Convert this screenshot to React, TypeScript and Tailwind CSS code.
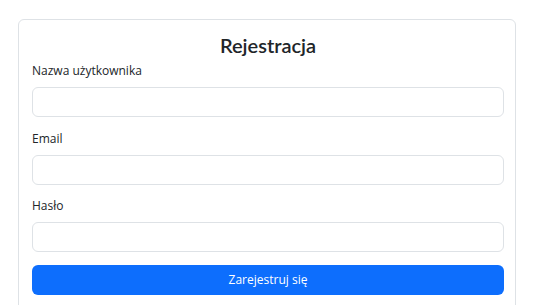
export default function App() {
  const fields = [
    { label: "Nazwa użytkownika", type: "text" },
    { label: "Email", type: "email" },
    { label: "Hasło", type: "password" },
  ]

  return (
    <div className="min-h-screen bg-white pl-[18px] pr-[19px] pt-[19px] font-['Open_Sans',sans-serif] text-[#212529]">
      <div className="rounded-md border border-[#dee2e6] pb-6 pl-[13px] pr-[11px] pt-[13px]">
        <h2 className="mb-[5px] text-center font-['Lato',sans-serif] text-[20px] font-semibold leading-[24px]">
          Rejestracja
        </h2>
        {fields.map((field) => (
          <div key={field.label} className="mb-[12.5px]">
            <label className="mb-[7px] block text-[12px] leading-[18px]">{field.label}</label>
            <input
              type={field.type}
              className="block h-[30px] w-full rounded-md border border-[#dee2e6] bg-white px-3 text-[12px] outline-none"
            />
          </div>
        ))}
        <button className="h-[30px] w-full rounded-md bg-[#0d6efd] text-[12px] text-white">Zarejestruj się</button>
      </div>
    </div>
  )
}
